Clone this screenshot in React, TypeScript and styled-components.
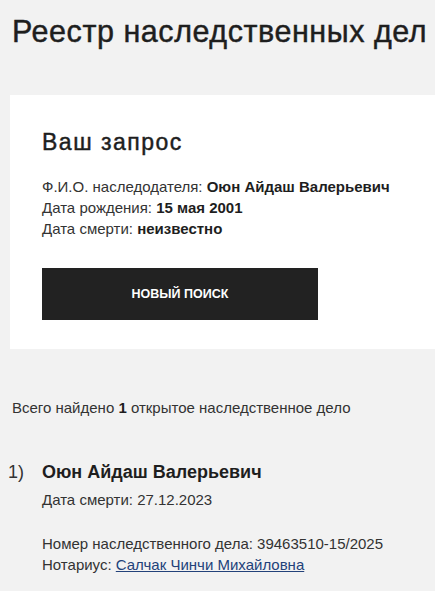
import React from "react";
import styled, { createGlobalStyle } from "styled-components";

const GlobalStyle = createGlobalStyle`
  body {
    margin: 0;
    background: #f2f2f2;
    font-family: "Liberation Sans", Arial, sans-serif;
    color: #222;
  }
`;

const Page = styled.div`
  padding: 13px 0 40px;
  overflow: hidden;
`;

const Title = styled.h1`
  margin: 0 0 46px 12px;
  font-size: 30.5px;
  line-height: 36px;
  font-weight: 400;
  letter-spacing: 0.55px;
  -webkit-text-stroke: 0.45px #1e1e1e;
  color: #1e1e1e;
  white-space: nowrap;
`;

const Card = styled.section`
  margin-left: 10px;
  background: #fff;
  padding: 34px 32px 29px;
`;

const CardTitle = styled.h2`
  margin: 0 0 21px;
  font-size: 23px;
  line-height: 26px;
  font-weight: 400;
  letter-spacing: 1.5px;
  -webkit-text-stroke: 0.45px #1e1e1e;
  color: #1e1e1e;
`;

const Line = styled.p`
  margin: 0;
  font-size: 15px;
  line-height: 21px;
  color: #333;
  white-space: nowrap;
`;

const Value = styled.b`
  font-weight: 700;
  color: #1e1e1e;
`;

const Button = styled.button`
  display: flex;
  align-items: center;
  justify-content: center;
  margin-top: 29px;
  width: 276px;
  height: 52px;
  border: 0;
  background: #222;
  color: #fff;
  font-family: inherit;
  font-size: 12.5px;
  font-weight: 700;
  cursor: pointer;
`;

const Summary = styled.p`
  margin: 48px 0 0 12px;
  font-size: 15px;
  line-height: 21px;
  color: #333;
`;

const Result = styled.div`
  display: grid;
  grid-template-columns: 34px 1fr;
  margin: 42px 0 0 8px;
`;

const Num = styled.span`
  font-size: 18px;
  line-height: 24px;
  color: #333;
`;

const Name = styled.h3`
  margin: 0 0 5px;
  font-size: 18px;
  line-height: 24px;
  font-weight: 700;
  color: #1e1e1e;
`;

const Block = styled.div<{ $gap?: number }>`
  margin-top: ${(p) => p.$gap ?? 0}px;
`;

const Link = styled.a`
  color: #23427a;
  text-decoration: underline;
`;

export default function App() {
  return (
    <Page>
      <GlobalStyle />
      <Title>Реестр наследственных дел</Title>
      <Card>
        <CardTitle>Ваш запрос</CardTitle>
        <Line>
          Ф.И.О. наследодателя: <Value>Оюн Айдаш Валерьевич</Value>
        </Line>
        <Line>
          Дата рождения: <Value>15 мая 2001</Value>
        </Line>
        <Line>
          Дата смерти: <Value>неизвестно</Value>
        </Line>
        <Button>НОВЫЙ ПОИСК</Button>
      </Card>
      <Summary>
        Всего найдено <Value>1</Value> открытое наследственное дело
      </Summary>
      <Result>
        <Num>1)</Num>
        <div>
          <Name>Оюн Айдаш Валерьевич</Name>
          <Line>Дата смерти: 27.12.2023</Line>
          <Block $gap={23}>
            <Line>Номер наследственного дела: 39463510-15/2025</Line>
            <Line>
              Нотариус: <Link href="#">Салчак Чинчи Михайловна</Link>
            </Line>
          </Block>
        </div>
      </Result>
    </Page>
  );
}
